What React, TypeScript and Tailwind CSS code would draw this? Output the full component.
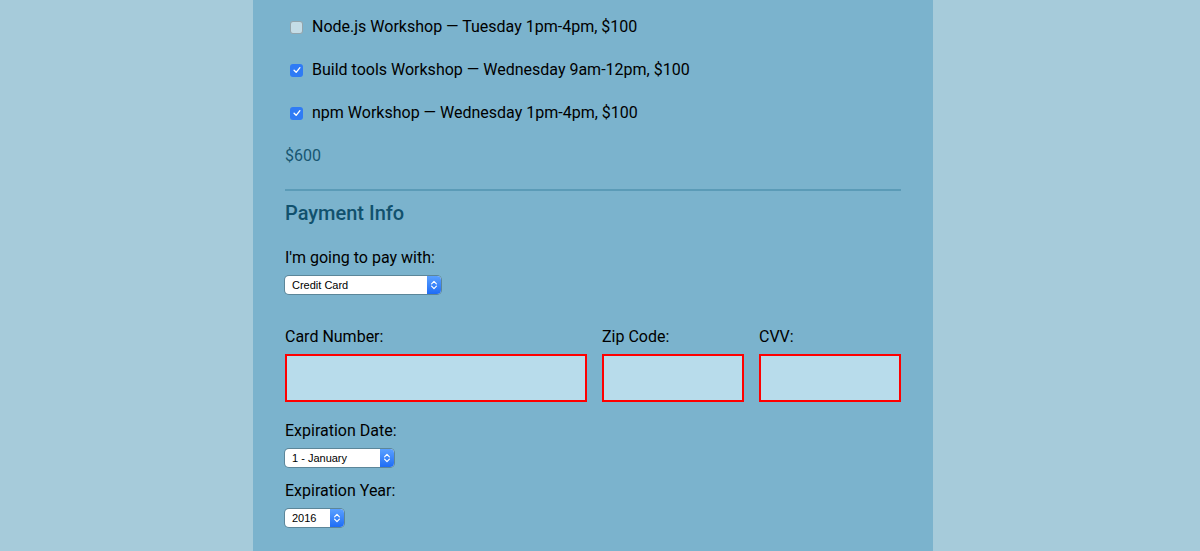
const workshops = [
  { label: 'Node.js Workshop — Tuesday 1pm-4pm, $100', checked: false },
  { label: 'Build tools Workshop — Wednesday 9am-12pm, $100', checked: true },
  { label: 'npm Workshop — Wednesday 1pm-4pm, $100', checked: true },
]

function FakeSelect({ value, width }: { value: string; width: string }) {
  return (
    <div
      className={`${width} h-[18px] flex rounded-[4px] bg-white shadow-[0_0_0_1px_rgba(0,0,0,0.25)] overflow-hidden`}
    >
      <div className="flex-1 pl-[7px] text-[11px] leading-[18px] text-black font-['Liberation_Sans',sans-serif]">
        {value}
      </div>
      <div className="w-[14px] flex items-center justify-center bg-gradient-to-b from-[#5aa0ff] to-[#1e6cf5]">
        <svg viewBox="0 0 10 14" className="w-[8px] h-[12px]">
          <path d="M2 5.5 L5 2.5 L8 5.5 M2 8.5 L5 11.5 L8 8.5" fill="none" stroke="white" strokeWidth="1.5" strokeLinecap="round" strokeLinejoin="round" />
        </svg>
      </div>
    </div>
  )
}

function Checkbox({ checked }: { checked: boolean }) {
  return checked ? (
    <div className="w-[13px] h-[13px] rounded-[3px] bg-[#2f7bf5] flex items-center justify-center">
      <svg viewBox="0 0 12 12" className="w-[10px] h-[10px]">
        <path d="M2.5 6.3 L5 8.8 L9.5 3.2" fill="none" stroke="white" strokeWidth="1.6" strokeLinecap="round" strokeLinejoin="round" />
      </svg>
    </div>
  ) : (
    <div className="w-[13px] h-[13px] rounded-[3px] bg-[#c5dde7] shadow-[inset_0_0_0_1px_rgba(0,0,0,0.25)]" />
  )
}

export default function App() {
  return (
    <div className="min-h-[551px] w-full bg-[#a6cbda] font-['Roboto',sans-serif] text-black">
      <div className="ml-[253px] w-[680px] h-[551px] bg-[#7bb3cd] px-8 overflow-hidden">
        {/* Activities */}
        <div className="pt-[17px] flex flex-col gap-[23px]">
          {workshops.map((w) => (
            <label key={w.label} className="flex items-center h-[20px] pl-[5px] gap-[9px] text-[16px]">
              <Checkbox checked={w.checked} />
              <span>{w.label}</span>
            </label>
          ))}
        </div>
        <p className="mt-[23px] text-[16px] leading-[20px] text-[#175671]">$600</p>

        <hr className="mt-[23px] border-0 h-[2px] bg-[#5b9bb7]" />

        {/* Payment Info */}
        <h2 className="mt-[10px] text-[20px] leading-[24px] font-medium text-[#11516d]">Payment Info</h2>
        <p className="mt-[23px] text-[16px] leading-[20px]">I'm going to pay with:</p>
        <div className="mt-[8px]">
          <FakeSelect value="Credit Card" width="w-[156px]" />
        </div>

        <div className="mt-[33px] flex gap-[15px]">
          <div className="w-[302px]">
            <p className="text-[16px] leading-[20px]">Card Number:</p>
            <div className="mt-[7px] h-[48px] border-2 border-[#ff0000] bg-[#b8dceb]" />
          </div>
          <div className="w-[142px]">
            <p className="text-[16px] leading-[20px]">Zip Code:</p>
            <div className="mt-[7px] h-[48px] border-2 border-[#ff0000] bg-[#b8dceb]" />
          </div>
          <div className="w-[142px]">
            <p className="text-[16px] leading-[20px]">CVV:</p>
            <div className="mt-[7px] h-[48px] border-2 border-[#ff0000] bg-[#b8dceb]" />
          </div>
        </div>

        <p className="mt-[19px] text-[16px] leading-[20px]">Expiration Date:</p>
        <div className="mt-[8px]">
          <FakeSelect value="1 - January" width="w-[109px]" />
        </div>
        <p className="mt-[14px] text-[16px] leading-[20px]">Expiration Year:</p>
        <div className="mt-[8px]">
          <FakeSelect value="2016" width="w-[59px]" />
        </div>
      </div>
    </div>
  )
}
